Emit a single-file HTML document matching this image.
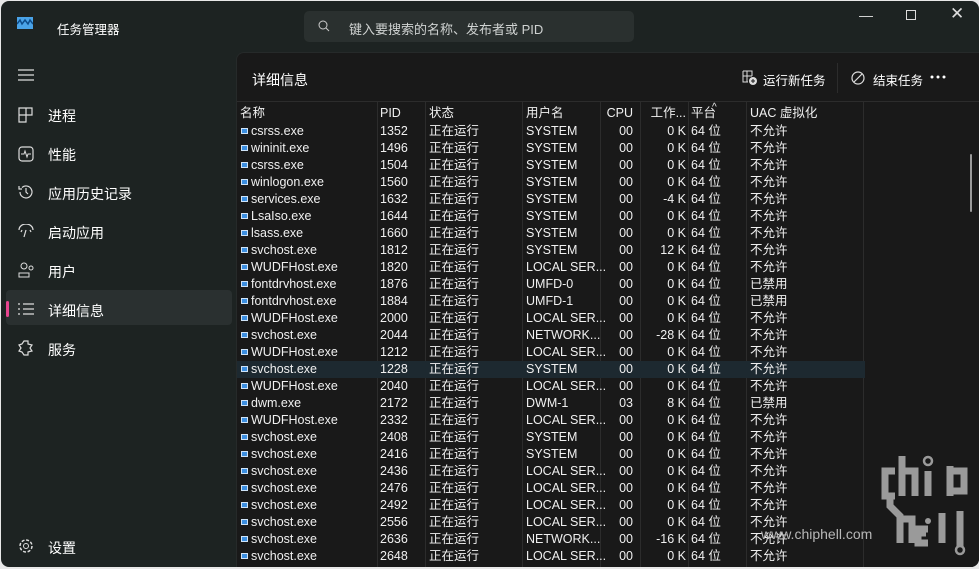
<!DOCTYPE html>
<html><head><meta charset="utf-8"><style>
*{margin:0;padding:0;box-sizing:border-box}
body{width:979px;height:569px;background:#e8e8e8;overflow:hidden;font-family:"Liberation Sans","Noto Sans CJK SC",sans-serif;color:#fff}
#win{position:absolute;left:1px;top:1px;width:978px;height:566px;background:#1d2322;border-radius:8px;overflow:hidden}
.t{position:absolute;white-space:nowrap}
#search{position:absolute;left:303px;top:10px;width:330px;height:31px;background:#2a302f;border-radius:5px}
#panel{position:absolute;left:235px;top:51px;width:743px;height:515px;background:#191919;border-top-left-radius:8px;border-top:1px solid #262a2a;border-left:1px solid #262a2a}
.nav{position:absolute;left:47px;font-size:14px;color:#fff}
.ico{position:absolute;left:17px}
.row{position:absolute;left:0;height:17px;width:628px;font-size:12.5px;line-height:17px;color:#f0f0f0}
.row span{position:absolute;top:0;white-space:nowrap}
.c1{left:14px}.c2{left:143px}.c3{left:192px}.c4{left:289px}.c5{right:232px;width:40px;text-align:right}.c6{left:403px;width:46px;text-align:right}.c7{left:454px}.c8{left:513px}
.sq{left:4px;top:5px!important;width:7px;height:6px;background:#3b8ee0;border:1px solid #cfe3f7}
.sep{position:absolute;top:49px;width:1px;height:466px;background:#2c2c2c}
</style></head><body>
<div id="win">
<svg class="t" style="left:16px;top:16px" width="16" height="12"><rect width="16" height="12" fill="#4aa3e8"/><path d="M0 7 L3 3 L5 7 L8 3 L11 7 L13 3 L16 7" stroke="#0d4c8a" stroke-width="1.5" fill="none"/></svg>
<div class="t" style="left:56px;top:18px;font-size:12.5px">任务管理器</div>
<div id="search"><svg class="t" style="left:14px;top:9px" width="12" height="12"><circle cx="5" cy="5" r="4" stroke="#ccc" fill="none"/><path d="M8 8 L11 11" stroke="#ccc"/></svg><div class="t" style="left:45px;top:8px;font-size:13px;color:#cfd2d1">键入要搜索的名称、发布者或 PID</div></div>
<div class="t" style="left:858px;top:6px;font-size:14px;color:#ddd">—</div>
<div class="t" style="left:905px;top:9px;width:10px;height:10px;border:1px solid #ddd"></div>
<div class="t" style="left:949px;top:3px;font-size:17px;color:#ddd">✕</div>
<svg class="t" style="left:17px;top:68px" width="16" height="12"><path d="M0 1H16M0 6H16M0 11H16" stroke="#ddd" stroke-width="1.2"/></svg>
<svg class="ico" style="top:106px" width="16" height="16"><path d="M1 1H14V8H8V15H1Z M8 1V8 M1 8H8" stroke="#ddd" fill="none" stroke-width="1.2"/></svg>
<div class="nav" style="top:105px">进程</div>
<svg class="ico" style="top:145px" width="16" height="16"><rect x="1" y="1" width="14" height="14" rx="3" stroke="#ddd" fill="none" stroke-width="1.2"/><path d="M3 8H6L7 5L9 11L10 8H13" stroke="#ddd" fill="none"/></svg>
<div class="nav" style="top:144px">性能</div>
<svg class="ico" style="top:183px" width="16" height="16"><path d="M2 8A6 6 0 1 0 4 3.5M1 2V5H4M8 4V8L10 10" stroke="#ddd" fill="none" stroke-width="1.2"/></svg>
<div class="nav" style="top:183px">应用历史记录</div>
<svg class="ico" style="top:223px" width="16" height="14"><path d="M1 6A7 6 0 0 1 15 6M8 6L6 13M4 6L3 8M12 6L13 8" stroke="#ddd" fill="none" stroke-width="1.2"/></svg>
<div class="nav" style="top:222px">启动应用</div>
<svg class="ico" style="top:261px" width="17" height="16"><circle cx="6" cy="4" r="3" stroke="#ddd" fill="none"/><path d="M1 15V11H11V15Z" stroke="#ddd" fill="none"/><circle cx="13" cy="6" r="2" stroke="#ddd" fill="none"/></svg>
<div class="nav" style="top:261px">用户</div>
<div class="t" style="left:5px;top:289px;width:226px;height:35px;background:#2a3030;border-radius:4px"></div>
<div class="t" style="left:5px;top:300px;width:3px;height:16px;background:#e8458f;border-radius:2px"></div>
<svg class="ico" style="top:302px" width="16" height="12"><path d="M0 1H2M0 6H2M0 11H2M5 1H16M5 6H16M5 11H16" stroke="#ddd" stroke-width="1.2"/></svg>
<div class="nav" style="top:300px">详细信息</div>
<svg class="ico" style="top:339px" width="16" height="16"><path d="M6 1L10 1L10 4L14 5L12 8L14 11L10 12L10 15L6 15L4 12L1 11L3 8L1 5L4 4Z" stroke="#ddd" fill="none" stroke-width="1.2"/></svg>
<div class="nav" style="top:339px">服务</div>
<svg class="ico" style="top:537px" width="16" height="16"><circle cx="8" cy="8" r="2.5" stroke="#ddd" fill="none"/><circle cx="8" cy="8" r="6" stroke="#ddd" stroke-dasharray="3 1.7" fill="none" stroke-width="1.5"/></svg>
<div class="nav" style="top:537px">设置</div>

<div id="panel">
<div class="t" style="left:15px;top:17px;font-size:14px">详细信息</div>
<svg class="t" style="left:505px;top:17px" width="16" height="16"><path d="M1 1H10V6M1 1V12H6M1 6H10M5 1V12" stroke="#ddd" fill="none"/><circle cx="11" cy="11" r="4" fill="#ddd"/><path d="M11 9V13M9 11H13" stroke="#191919"/></svg>
<div class="t" style="left:526px;top:17px;font-size:12.5px">运行新任务</div>
<div class="t" style="left:600px;top:10px;width:1px;height:30px;background:#2c2c2c"></div>
<svg class="t" style="left:614px;top:18px" width="14" height="14"><circle cx="7" cy="7" r="6" stroke="#ddd" fill="none" stroke-width="1.2"/><path d="M3 11L11 3" stroke="#ddd" stroke-width="1.2"/></svg>
<div class="t" style="left:636px;top:17px;font-size:12.5px">结束任务</div>
<svg class="t" style="left:693px;top:22px" width="16" height="4"><circle cx="2" cy="2" r="1.5" fill="#fff"/><circle cx="8" cy="2" r="1.5" fill="#fff"/><circle cx="14" cy="2" r="1.5" fill="#fff"/></svg>
<div class="t" style="left:0;top:48px;width:743px;height:1px;background:#2c2c2c"></div>
<div class="sep" style="left:140px"></div><div class="sep" style="left:188px"></div><div class="sep" style="left:285px"></div><div class="sep" style="left:363px"></div><div class="sep" style="left:403px"></div><div class="sep" style="left:451px"></div><div class="sep" style="left:509px"></div><div class="sep" style="left:626px"></div>
<div class="t" style="left:733px;top:101px;width:2px;height:58px;background:#9a9a9a;border-radius:1px"></div>
<div class="row" style="top:52px"><span style="left:3px">名称</span><span class="c2">PID</span><span class="c3">状态</span><span class="c4">用户名</span><span class="c5">CPU</span><span class="c6">工作...</span><span class="c7">平台</span><span style="left:475px;top:-6px;font-size:10px">^</span><span class="c8">UAC 虚拟化</span></div>
<div class="row" style="top:70px"><span class="sq"></span><span class="c1">csrss.exe</span><span class="c2">1352</span><span class="c3">正在运行</span><span class="c4">SYSTEM</span><span class="c5">00</span><span class="c6">0 K</span><span class="c7">64 位</span><span class="c8">不允许</span></div>
<div class="row" style="top:87px"><span class="sq"></span><span class="c1">wininit.exe</span><span class="c2">1496</span><span class="c3">正在运行</span><span class="c4">SYSTEM</span><span class="c5">00</span><span class="c6">0 K</span><span class="c7">64 位</span><span class="c8">不允许</span></div>
<div class="row" style="top:104px"><span class="sq"></span><span class="c1">csrss.exe</span><span class="c2">1504</span><span class="c3">正在运行</span><span class="c4">SYSTEM</span><span class="c5">00</span><span class="c6">0 K</span><span class="c7">64 位</span><span class="c8">不允许</span></div>
<div class="row" style="top:121px"><span class="sq"></span><span class="c1">winlogon.exe</span><span class="c2">1560</span><span class="c3">正在运行</span><span class="c4">SYSTEM</span><span class="c5">00</span><span class="c6">0 K</span><span class="c7">64 位</span><span class="c8">不允许</span></div>
<div class="row" style="top:138px"><span class="sq"></span><span class="c1">services.exe</span><span class="c2">1632</span><span class="c3">正在运行</span><span class="c4">SYSTEM</span><span class="c5">00</span><span class="c6">-4 K</span><span class="c7">64 位</span><span class="c8">不允许</span></div>
<div class="row" style="top:155px"><span class="sq"></span><span class="c1">LsaIso.exe</span><span class="c2">1644</span><span class="c3">正在运行</span><span class="c4">SYSTEM</span><span class="c5">00</span><span class="c6">0 K</span><span class="c7">64 位</span><span class="c8">不允许</span></div>
<div class="row" style="top:172px"><span class="sq"></span><span class="c1">lsass.exe</span><span class="c2">1660</span><span class="c3">正在运行</span><span class="c4">SYSTEM</span><span class="c5">00</span><span class="c6">0 K</span><span class="c7">64 位</span><span class="c8">不允许</span></div>
<div class="row" style="top:189px"><span class="sq"></span><span class="c1">svchost.exe</span><span class="c2">1812</span><span class="c3">正在运行</span><span class="c4">SYSTEM</span><span class="c5">00</span><span class="c6">12 K</span><span class="c7">64 位</span><span class="c8">不允许</span></div>
<div class="row" style="top:206px"><span class="sq"></span><span class="c1">WUDFHost.exe</span><span class="c2">1820</span><span class="c3">正在运行</span><span class="c4">LOCAL SER...</span><span class="c5">00</span><span class="c6">0 K</span><span class="c7">64 位</span><span class="c8">不允许</span></div>
<div class="row" style="top:223px"><span class="sq"></span><span class="c1">fontdrvhost.exe</span><span class="c2">1876</span><span class="c3">正在运行</span><span class="c4">UMFD-0</span><span class="c5">00</span><span class="c6">0 K</span><span class="c7">64 位</span><span class="c8">已禁用</span></div>
<div class="row" style="top:240px"><span class="sq"></span><span class="c1">fontdrvhost.exe</span><span class="c2">1884</span><span class="c3">正在运行</span><span class="c4">UMFD-1</span><span class="c5">00</span><span class="c6">0 K</span><span class="c7">64 位</span><span class="c8">已禁用</span></div>
<div class="row" style="top:257px"><span class="sq"></span><span class="c1">WUDFHost.exe</span><span class="c2">2000</span><span class="c3">正在运行</span><span class="c4">LOCAL SER...</span><span class="c5">00</span><span class="c6">0 K</span><span class="c7">64 位</span><span class="c8">不允许</span></div>
<div class="row" style="top:274px"><span class="sq"></span><span class="c1">svchost.exe</span><span class="c2">2044</span><span class="c3">正在运行</span><span class="c4">NETWORK...</span><span class="c5">00</span><span class="c6">-28 K</span><span class="c7">64 位</span><span class="c8">不允许</span></div>
<div class="row" style="top:291px"><span class="sq"></span><span class="c1">WUDFHost.exe</span><span class="c2">1212</span><span class="c3">正在运行</span><span class="c4">LOCAL SER...</span><span class="c5">00</span><span class="c6">0 K</span><span class="c7">64 位</span><span class="c8">不允许</span></div>
<div class="row" style="top:308px;background:#1d2930"><span class="sq"></span><span class="c1">svchost.exe</span><span class="c2">1228</span><span class="c3">正在运行</span><span class="c4">SYSTEM</span><span class="c5">00</span><span class="c6">0 K</span><span class="c7">64 位</span><span class="c8">不允许</span></div>
<div class="row" style="top:325px"><span class="sq"></span><span class="c1">WUDFHost.exe</span><span class="c2">2040</span><span class="c3">正在运行</span><span class="c4">LOCAL SER...</span><span class="c5">00</span><span class="c6">0 K</span><span class="c7">64 位</span><span class="c8">不允许</span></div>
<div class="row" style="top:342px"><span class="sq"></span><span class="c1">dwm.exe</span><span class="c2">2172</span><span class="c3">正在运行</span><span class="c4">DWM-1</span><span class="c5">03</span><span class="c6">8 K</span><span class="c7">64 位</span><span class="c8">已禁用</span></div>
<div class="row" style="top:359px"><span class="sq"></span><span class="c1">WUDFHost.exe</span><span class="c2">2332</span><span class="c3">正在运行</span><span class="c4">LOCAL SER...</span><span class="c5">00</span><span class="c6">0 K</span><span class="c7">64 位</span><span class="c8">不允许</span></div>
<div class="row" style="top:376px"><span class="sq"></span><span class="c1">svchost.exe</span><span class="c2">2408</span><span class="c3">正在运行</span><span class="c4">SYSTEM</span><span class="c5">00</span><span class="c6">0 K</span><span class="c7">64 位</span><span class="c8">不允许</span></div>
<div class="row" style="top:393px"><span class="sq"></span><span class="c1">svchost.exe</span><span class="c2">2416</span><span class="c3">正在运行</span><span class="c4">SYSTEM</span><span class="c5">00</span><span class="c6">0 K</span><span class="c7">64 位</span><span class="c8">不允许</span></div>
<div class="row" style="top:410px"><span class="sq"></span><span class="c1">svchost.exe</span><span class="c2">2436</span><span class="c3">正在运行</span><span class="c4">LOCAL SER...</span><span class="c5">00</span><span class="c6">0 K</span><span class="c7">64 位</span><span class="c8">不允许</span></div>
<div class="row" style="top:427px"><span class="sq"></span><span class="c1">svchost.exe</span><span class="c2">2476</span><span class="c3">正在运行</span><span class="c4">LOCAL SER...</span><span class="c5">00</span><span class="c6">0 K</span><span class="c7">64 位</span><span class="c8">不允许</span></div>
<div class="row" style="top:444px"><span class="sq"></span><span class="c1">svchost.exe</span><span class="c2">2492</span><span class="c3">正在运行</span><span class="c4">LOCAL SER...</span><span class="c5">00</span><span class="c6">0 K</span><span class="c7">64 位</span><span class="c8">不允许</span></div>
<div class="row" style="top:461px"><span class="sq"></span><span class="c1">svchost.exe</span><span class="c2">2556</span><span class="c3">正在运行</span><span class="c4">LOCAL SER...</span><span class="c5">00</span><span class="c6">0 K</span><span class="c7">64 位</span><span class="c8">不允许</span></div>
<div class="row" style="top:478px"><span class="sq"></span><span class="c1">svchost.exe</span><span class="c2">2636</span><span class="c3">正在运行</span><span class="c4">NETWORK...</span><span class="c5">00</span><span class="c6">-16 K</span><span class="c7">64 位</span><span class="c8">不允许</span></div>
<div class="row" style="top:495px"><span class="sq"></span><span class="c1">svchost.exe</span><span class="c2">2648</span><span class="c3">正在运行</span><span class="c4">LOCAL SER...</span><span class="c5">00</span><span class="c6">0 K</span><span class="c7">64 位</span><span class="c8">不允许</span></div>
<svg class="t" style="left:643px;top:398px" width="90" height="108"><g stroke="#9a9a9a" stroke-width="7" fill="none"><path d="M15 20H5V45H15"/><path d="M22 5V45M22 20H35V45"/><path d="M48 20V45"/><path d="M70 15V45M70 20H84V40H70"/><path d="M10 45V55L20 65V92M20 68H32V92"/><path d="M48 78H38V92H48M38 82H46"/><path d="M62 62V92"/><path d="M80 60V95"/></g><circle cx="48" cy="10" r="4" stroke="#9a9a9a" stroke-width="2.5" fill="none"/><circle cx="80" cy="99" r="4" stroke="#9a9a9a" stroke-width="2.5" fill="none"/><circle cx="48" cy="70" r="3" fill="#9a9a9a"/></svg>
<div class="t" style="left:524px;top:473px;font-size:14px;color:#b8b8b8">www.chiphell.com</div>
</div>
</div>
</body></html>
